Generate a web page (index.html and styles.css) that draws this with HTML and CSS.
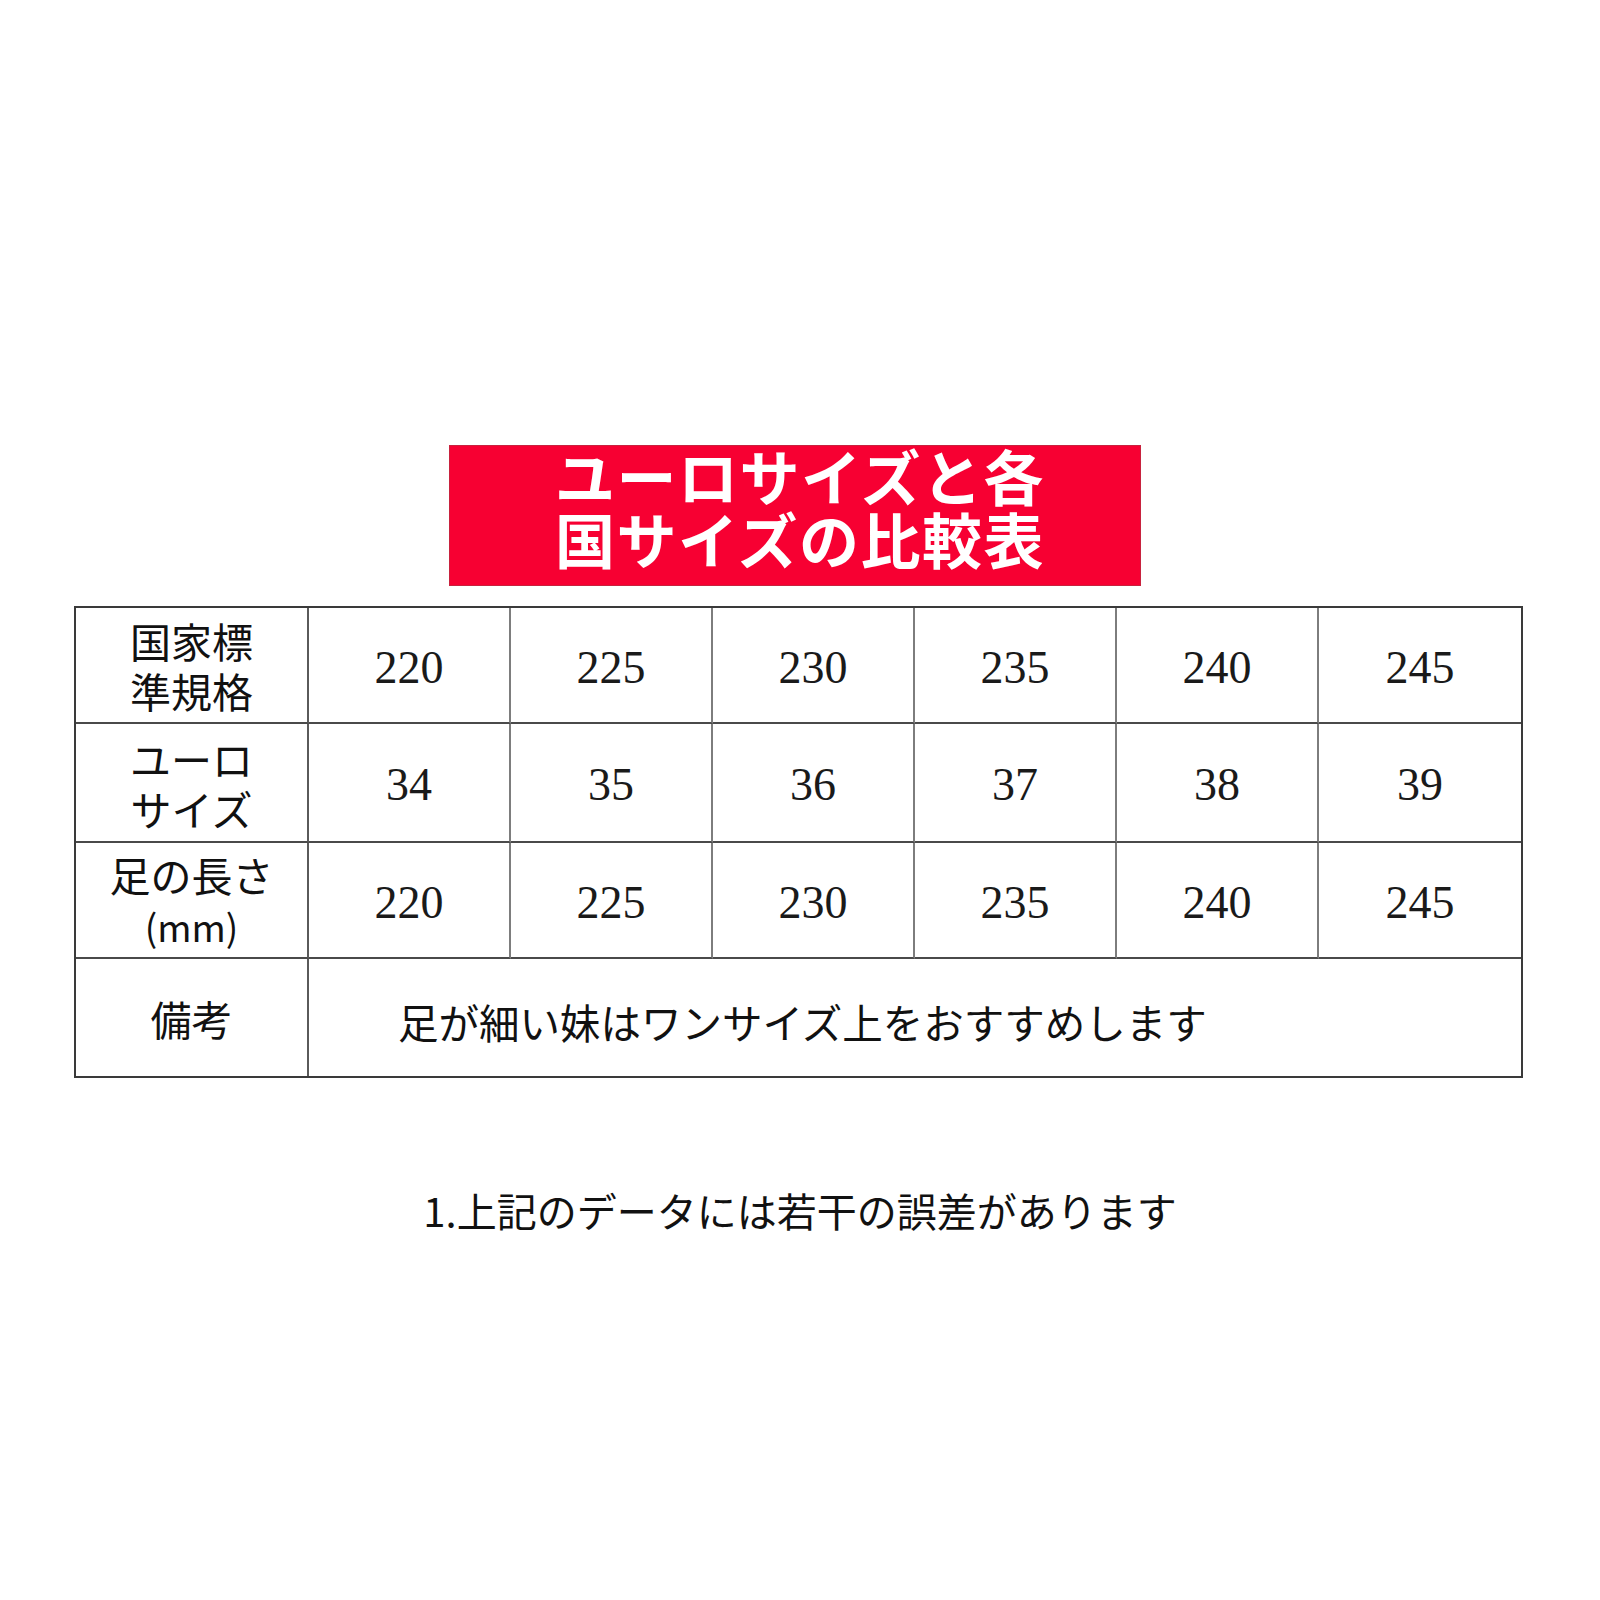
FILE: index.html
```html
<!DOCTYPE html>
<html lang="ja">
<head>
<meta charset="utf-8">
<title>ユーロサイズと各国サイズの比較表</title>
<link rel="stylesheet" href="styles.css">
</head>
<body>
<div class="page">
  <div class="banner"><h1 class="banner-title">ユーロサイズと各<br>国サイズの比較表</h1></div>
  <div class="size-table">
    <div class="cell label"><span>国家標<br>準規格</span></div>
    <div class="cell num">220</div>
    <div class="cell num">225</div>
    <div class="cell num">230</div>
    <div class="cell num">235</div>
    <div class="cell num">240</div>
    <div class="cell num last">245</div>

    <div class="cell label"><span>ユーロ<br>サイズ</span></div>
    <div class="cell num">34</div>
    <div class="cell num">35</div>
    <div class="cell num">36</div>
    <div class="cell num">37</div>
    <div class="cell num">38</div>
    <div class="cell num last">39</div>

    <div class="cell label"><span>足の長さ<br><span class="unit">(mm)</span></span></div>
    <div class="cell num">220</div>
    <div class="cell num">225</div>
    <div class="cell num">230</div>
    <div class="cell num">235</div>
    <div class="cell num">240</div>
    <div class="cell num last">245</div>

    <div class="cell label bottom"><span>備考</span></div>
    <div class="cell note bottom last">足が細い妹はワンサイズ上をおすすめします</div>
  </div>
  <p class="footnote">1.上記のデータには若干の誤差があります</p>
</div>
</body>
</html>
```

FILE: styles.css
```css
* { box-sizing: border-box; }
html, body { margin: 0; padding: 0; background: #ffffff; }
body { font-family: "Noto Sans CJK JP", "Noto Sans", sans-serif; color: #111; }

.page {
  width: 1600px;
  height: 1600px;
  padding-top: 445px;
}

.banner {
  width: 692px;
  height: 141px;
  margin: 0 0 20px 449px;
  padding: 0 0 20px 10px;
  background: #f70032;
  border: 1px solid #c8223e;
  display: flex;
  align-items: center;
  justify-content: center;
}

.banner-title {
  margin: 0;
  color: #ffffff;
  font-family: "Noto Sans CJK JP", sans-serif;
  font-weight: 700;
  font-size: 60px;
  line-height: 63px;
  text-align: center;
  letter-spacing: 1.5px;
}

.size-table {
  margin-left: 74px;
  width: 1449px;
  display: grid;
  grid-template-columns: 233px repeat(6, 1fr);
  grid-template-rows: 116px 119px 116px 117px;
  border: 2px solid #3a3a3a;
}

.cell {
  display: flex;
  align-items: center;
  justify-content: center;
  border-right: 2px solid #7d7d7d;
  border-bottom: 2px solid #4a4a4a;
}
.cell.last { border-right: none; }
.cell.bottom { border-bottom: none; }
.label { border-right-color: #5a5a5a; }

.label > span {
  font-size: 41px;
  line-height: 50px;
  text-align: center;
  color: #111;
}

.label .unit {
  font-size: 37px;
}

.num {
  font-family: "Liberation Serif", "Times New Roman", serif;
  font-size: 46px;
  color: #1a1a1a;
  padding-top: 4px;
}

.note {
  grid-column: span 6;
  justify-content: flex-start;
  padding-left: 89px;
  padding-top: 8px;
  font-size: 40.5px;
  color: #111;
}

.footnote {
  margin: 109px 0 0 0;
  text-align: center;
  font-size: 40px;
  line-height: 46px;
  color: #111;
}
```
